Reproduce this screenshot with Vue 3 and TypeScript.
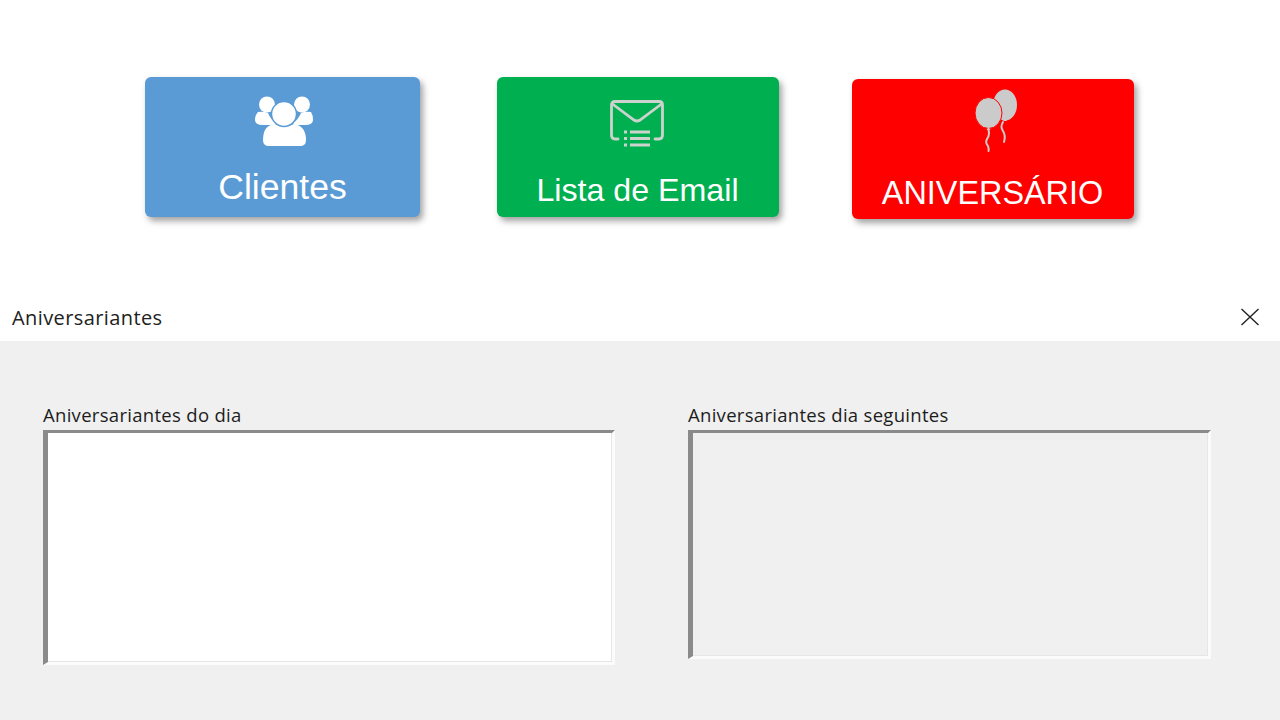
<script setup lang="ts">
const lists = [
  { label: 'Aniversariantes do dia', cls: 'today' },
  { label: 'Aniversariantes dia seguintes', cls: 'next' },
]
</script>

<template>
  <div class="page">
    <section class="menu">
      <div class="card blue">
        <svg class="icon people" width="58" height="50" viewBox="0 0 58 50">
          <circle cx="12" cy="8.500" r="8" fill="#fff" />
          <circle cx="47" cy="8.500" r="8" fill="#fff" />
          <path d="M3 16 Q9 15 13 17 Q16 24 21 27 L19 29 Q15 29 8 29 Q0 29 0 24 Q0 19 3 16Z" fill="#fff" />
          <path d="M56 16 Q50 15 46 17 Q43 24 38 27 L40 29 Q44 29 50 29 Q58 29 58 24 Q58 19 56 16Z" fill="#fff" />
          <path d="M8 44 Q8 29 20 28 Q29 33 39 28 Q51 30 51 44 Q51 50 45 50 L14 50 Q8 50 8 44Z" fill="#fff" />
          <circle cx="29" cy="18" r="12.500" fill="#fff" stroke="#5b9bd5" stroke-width="1.500" />
        </svg>
        <span class="title clientes">Clientes</span>
      </div>

      <div class="card green">
        <svg class="icon mail" width="54" height="48" viewBox="0 0 54 48" fill="none" stroke="#ccd3cd" stroke-width="2.800">
          <path d="M8 39 L5 39 Q1.500 39 1.500 35 L1.500 5 Q1.500 1.500 5 1.500 L49 1.500 Q52.500 1.500 52.500 5 L52.500 35 Q52.500 39 49 39 L45 39" stroke-linecap="round" />
          <path d="M2.500 4 L24 20 Q27 22 30 20 L51.500 4" />
          <path d="M20 32 H40 M20 38.500 H40 M20 45 H40" />
          <path d="M14 32 H17 M14 38.500 H17 M14 45 H17" />
        </svg>
        <span class="title email">Lista de Email</span>
      </div>

      <div class="card red">
        <svg class="icon balloons" width="42" height="63" viewBox="0 0 42 63">
          <ellipse cx="30" cy="16" rx="12" ry="15.500" fill="#cbcbcb" />
          <path d="M28 32 L32 32 L30 29Z" fill="#cbcbcb" />
          <path d="M28 33 Q25 38 28 42 Q31 47 29 53" fill="none" stroke="#cbcbcb" stroke-width="2" stroke-linecap="round" />
          <ellipse cx="13.500" cy="24" rx="13.500" ry="15.500" fill="#cbcbcb" stroke="#ff0000" stroke-width="1" />
          <path d="M11.500 41 L15.500 41 L13.500 38Z" fill="#cbcbcb" />
          <path d="M13.500 41 Q15 46 12 50 Q10 54 13 57 Q14 60 13.500 62" fill="none" stroke="#cbcbcb" stroke-width="2" stroke-linecap="round" />
        </svg>
        <span class="title aniversario">ANIVERSÁRIO</span>
      </div>
    </section>

    <header class="titlebar">
      <span class="window-title">Aniversariantes</span>
      <svg class="close" width="20" height="18" viewBox="0 0 20 18" fill="none" stroke="#222" stroke-width="1.400">
        <path d="M1.500 1 L18.500 17 M18.500 1 L1.500 17" />
      </svg>
    </header>

    <main class="panel">
      <div v-for="list in lists" :key="list.cls" class="group" :class="list.cls">
        <label class="label">{{ list.label }}</label>
        <div class="box"></div>
      </div>
    </main>
  </div>
</template>

<style>
html,
body {
  margin: 0;
  background: #fff;
}
</style>

<style scoped>
.page {
  width: 1280px;
  height: 720px;
  display: flex;
  flex-direction: column;
  overflow: hidden;
  background: #fff;
}

.menu {
  height: 296px;
  box-sizing: border-box;
  padding: 77px 0 0 145px;
  display: flex;
  align-items: flex-start;
  font-family: "Liberation Sans", Arial, sans-serif;
  color: #fff;
}

.card {
  height: 140px;
  box-sizing: border-box;
  border-radius: 6px;
  display: flex;
  flex-direction: column;
  align-items: center;
  box-shadow: 3px 4px 6px rgba(70, 70, 70, 0.5);
}

.blue {
  width: 275px;
  background: #5b9bd5;
  margin-right: 77px;
}

.green {
  width: 282px;
  background: #00b050;
  margin-right: 73px;
}

.red {
  width: 282px;
  background: #ff0000;
  margin-top: 2px;
}

.icon {
  display: block;
  flex: none;
}

.people {
  margin: 19px 0 0 3px;
}

.mail {
  margin: 23px 0 0 -2px;
}

.balloons {
  margin: 10px 0 0 5px;
}

.title {
  line-height: 40px;
  white-space: nowrap;
}

.clientes {
  font-size: 35.600px;
  margin: 21px 0 0;
}

.email {
  font-size: 32.200px;
  margin: 22px 0 0 -1px;
}

.aniversario {
  font-size: 32.400px;
  margin: 21px 0 0 -1px;
}

.titlebar {
  height: 45px;
  flex: none;
  box-sizing: border-box;
  padding: 0 20px 0 12px;
  display: flex;
  align-items: center;
  justify-content: space-between;
}

.window-title {
  font-family: "Open Sans", "Noto Sans", sans-serif;
  font-size: 20px;
  letter-spacing: 0.4px;
  color: #222;
  margin-bottom: 2px;
}

.close {
  margin-bottom: 3px;
}

.panel {
  flex: 1;
  background: #f0f0f0;
  box-sizing: border-box;
  padding: 62px 0 0 43px;
  display: flex;
  align-items: flex-start;
  gap: 73px;
  font-family: "Open Sans", "Noto Sans", sans-serif;
}

.label {
  display: block;
  height: 27px;
  line-height: 24px;
  font-size: 18.500px;
  letter-spacing: 0.3px;
  color: #1c1c1c;
  white-space: nowrap;
}

.box {
  box-sizing: border-box;
  border-style: solid;
  border-width: 3px 3px 3px 5px;
  border-color: #8a8a8a #fbfbfb #fbfbfb #8a8a8a;
  box-shadow: inset -1px -1px 0 #e6e6e6;
}

.today .box {
  width: 572px;
  height: 235px;
  background: #fff;
}

.next .box {
  width: 523px;
  height: 229px;
  background: #f0f0f0;
}
</style>
